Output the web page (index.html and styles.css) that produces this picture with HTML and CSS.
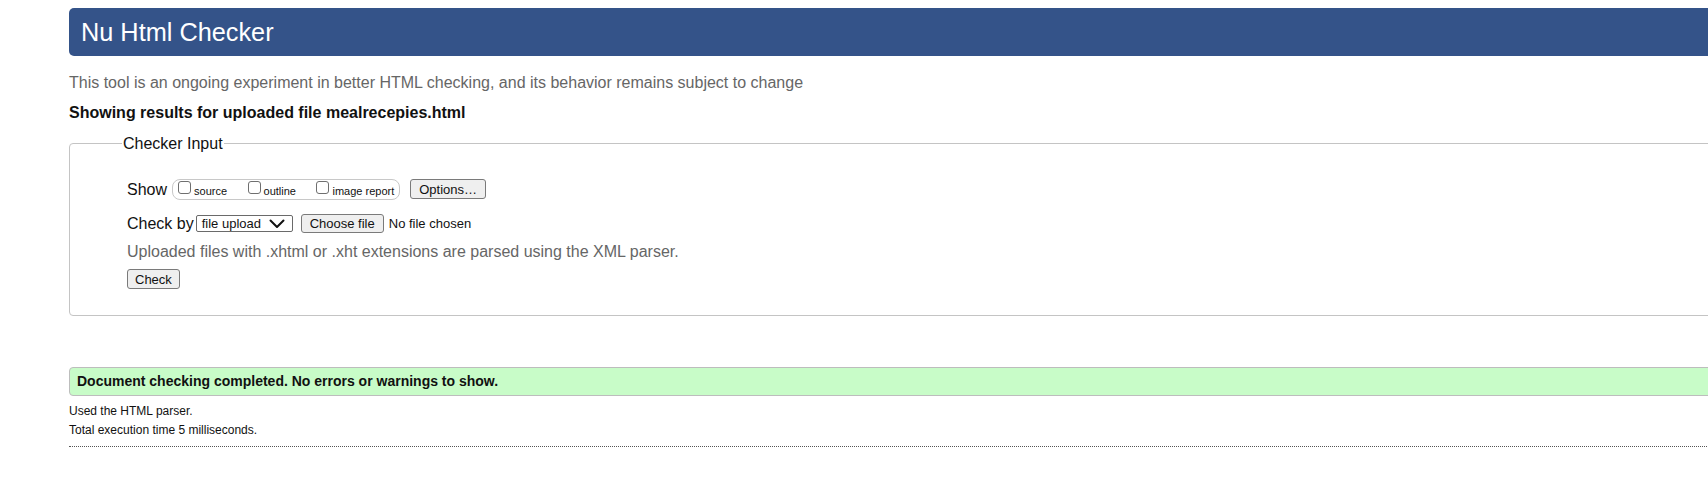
FILE: index.html
```html
<!DOCTYPE html>
<html lang="en">
<head>
<meta charset="utf-8">
<title>Nu Html Checker</title>
<link rel="stylesheet" href="styles.css">
</head>
<body>
<div class="page">
  <h1 class="title">Nu Html Checker</h1>
  <p class="intro">This tool is an ongoing experiment in better HTML checking, and its behavior remains subject to change</p>
  <p class="results-for">Showing results for uploaded file mealrecepies.html</p>

  <fieldset class="checker">
    <legend class="legend">Checker Input</legend>
    <div class="row show-row">
      <span class="lbl">Show</span>
      <span class="opts">
        <span class="opt"><span class="cb"></span><span class="opt-text">source</span></span>
        <span class="opt"><span class="cb"></span><span class="opt-text">outline</span></span>
        <span class="opt"><span class="cb"></span><span class="opt-text">image report</span></span>
      </span>
      <span class="btn btn-options">Options…</span>
    </div>
    <div class="row by-row">
      <span class="lbl">Check by</span>
      <span class="select">file upload
        <svg class="chev" width="16" height="10" viewBox="0 0 16 10"><polyline points="1.5,1.5 8,8 14.5,1.5" fill="none" stroke="#111" stroke-width="2" stroke-linecap="round" stroke-linejoin="round"/></svg>
      </span>
      <span class="btn btn-choose">Choose file</span>
      <span class="nofile">No file chosen</span>
    </div>
    <p class="hint">Uploaded files with .xhtml or .xht extensions are parsed using the XML parser.</p>
    <span class="btn btn-check">Check</span>
  </fieldset>

  <p class="success">Document checking completed. No errors or warnings to show.</p>
  <p class="small first">Used the HTML parser.</p>
  <p class="small">Total execution time 5 milliseconds.</p>
  <div class="dotted"></div>
</div>
</body>
</html>
```

FILE: styles.css
```css
html, body {
  margin: 0;
  padding: 0;
  background: #fff;
  overflow: hidden;
}

body {
  font-family: "Liberation Sans", Arial, Helvetica, sans-serif;
  color: #111;
}

.page {
  margin: 8px 0 0 69px;
  width: 1700px;
}

.title {
  margin: 0;
  padding: 9px 12px;
  background: #345389;
  color: #fff;
  font-size: 25.3px;
  font-weight: normal;
  line-height: 30px;
  border-radius: 5px;
}

.intro {
  margin: 17px 0 0;
  font-size: 16px;
  line-height: 19px;
  color: #666;
}

.results-for {
  margin: 11px 0 0;
  font-size: 16px;
  line-height: 19px;
  font-weight: bold;
  color: #111;
}

.checker {
  margin: 12px 0 0;
  padding: 25px 0 26px 57px;
  border: 1px solid #c4c4c4;
  border-radius: 4px;
  min-width: 0;
}

.legend {
  margin-left: -5px;
  padding: 0 1px;
  font-size: 16px;
  line-height: 19px;
  color: #111;
}

.row {
  display: flex;
  align-items: center;
}

.show-row {
  height: 22px;
}

.lbl {
  font-size: 16px;
  line-height: 19px;
  color: #111;
}

.opts {
  display: flex;
  align-items: center;
  margin-left: 5px;
  height: 19px;
  padding: 0 5px;
  border: 1px solid #c8c8c8;
  border-radius: 8px;
}

.opt {
  display: flex;
  align-items: center;
}

.opt + .opt {
  margin-left: 20.5px;
}

.cb {
  box-sizing: border-box;
  width: 13px;
  height: 13px;
  border: 1px solid #6f6f6f;
  border-radius: 3px;
  background: #fff;
  margin-right: 3px;
  position: relative;
  top: -2px;
}

.opt-text {
  font-size: 11px;
  line-height: 13px;
  position: relative;
  top: 2px;
}

.btn {
  box-sizing: border-box;
  display: inline-flex;
  align-items: center;
  height: 20px;
  padding: 0 8px;
  font-size: 13px;
  line-height: 15px;
  color: #111;
  background: #efefef;
  border: 1px solid #7a7a7a;
  border-radius: 3px;
}

.btn-options {
  margin-left: 10px;
}

.by-row {
  margin-top: 14px;
  height: 19px;
}

.select {
  box-sizing: border-box;
  display: inline-flex;
  align-items: center;
  margin-left: 2px;
  width: 97px;
  height: 17px;
  padding: 0 7px 0 5px;
  font-size: 13px;
  line-height: 15px;
  border: 1px solid #6a6a6a;
  border-radius: 2px;
  background: #fff;
  justify-content: space-between;
}

.chev {
  display: block;
}

.btn-choose {
  margin-left: 8px;
  height: 19px;
}

.nofile {
  margin-left: 5px;
  font-size: 13px;
  line-height: 15px;
}

.hint {
  margin: 9px 0 0;
  font-size: 16px;
  line-height: 19px;
  color: #666;
}

.btn-check {
  margin-top: 8px;
  padding: 0 7px;
}

.success {
  margin: 51px 0 0;
  padding: 5px 7px;
  font-size: 14px;
  line-height: 17px;
  font-weight: bold;
  color: #111;
  background: #c8fcc8;
  border: 1px solid #bdbdbd;
  border-radius: 4px;
}

.small {
  margin: 5px 0 0;
  font-size: 12px;
  line-height: 14px;
  color: #111;
}

.small.first {
  margin-top: 8px;
}

.dotted {
  margin-top: 9px;
  border-top: 1px dotted #555;
}
```
